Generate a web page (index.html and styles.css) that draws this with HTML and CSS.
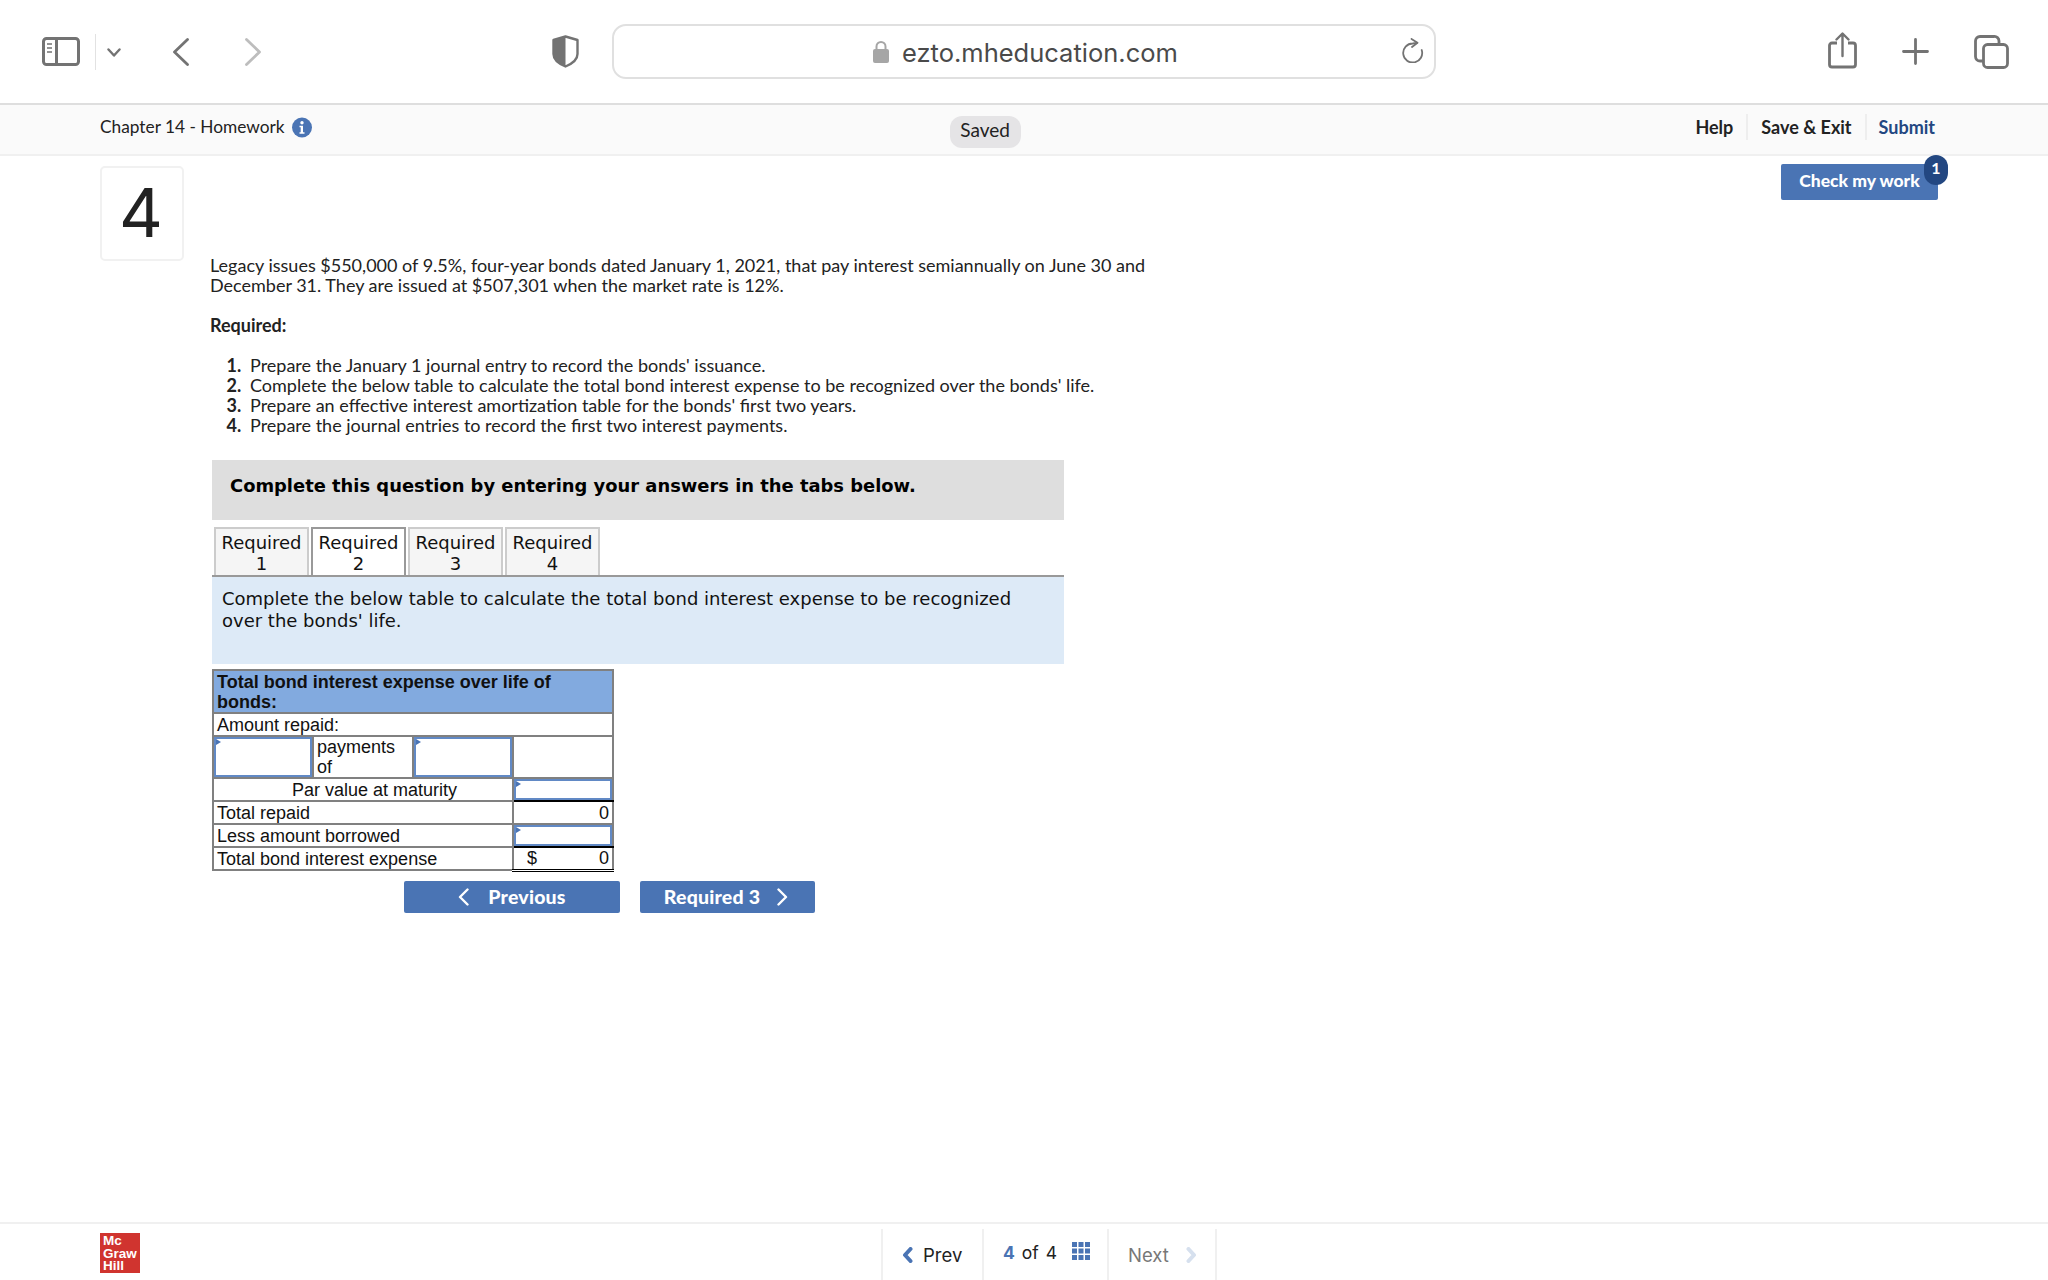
FILE: index.html
```html
<!DOCTYPE html>
<html lang="en">
<head>
<meta charset="utf-8">
<title>Chapter 14 - Homework</title>
<link rel="stylesheet" href="styles.css">
</head>
<body>
<div class="toolbar">
  <svg class="ic-sidebar" width="38" height="29" viewBox="0 0 38 29"><rect x="1.5" y="1.5" width="35" height="26" rx="3" fill="none" stroke="#737373" stroke-width="3"/><path d="M14.5 2v25" stroke="#737373" stroke-width="3"/><path d="M5 7h5M5 11h5M5 15h5" stroke="#737373" stroke-width="1.6"/></svg>
  <span class="tb-sep"></span>
  <svg class="ic-down" width="14" height="9" viewBox="0 0 14 9"><path d="M1.5 1.5L7 7.5l5.500-6" fill="none" stroke="#737373" stroke-width="2.400" stroke-linecap="round" stroke-linejoin="round"/></svg>
  <svg class="ic-back" width="18" height="28" viewBox="0 0 18 28"><path d="M15.500 1.500L2.500 14l13 12.500" fill="none" stroke="#737373" stroke-width="2.800" stroke-linecap="round" stroke-linejoin="round"/></svg>
  <svg class="ic-fwd" width="18" height="28" viewBox="0 0 18 28"><path d="M2.500 1.500L15.500 14l-13 12.500" fill="none" stroke="#bdbdbd" stroke-width="2.800" stroke-linecap="round" stroke-linejoin="round"/></svg>
  <svg class="ic-shield" width="27" height="33" viewBox="0 0 27 33"><path d="M13.500 1.500L25.500 5v14c0 6-6 10-12 12.500C7.500 29 1.500 25 1.500 19V5z" fill="#fff" stroke="#737373" stroke-width="2.400" stroke-linejoin="round"/><path d="M13.500 1.500V31.500C7.500 29 1.500 25 1.500 19V5z" fill="#737373"/></svg>
  <div class="urlbar">
    <svg class="ic-lock" width="16" height="23" viewBox="0 0 16 23"><rect x="0" y="9" width="16" height="14" rx="2" fill="#a6a6a6"/><path d="M3.500 10V6.500a4.500 4.500 0 0 1 9 0V10" fill="none" stroke="#a6a6a6" stroke-width="2"/></svg>
    <span class="url">ezto.mheducation.com</span>
    <svg class="ic-reload" width="24" height="25" viewBox="0 0 24 25"><path d="M21.700 12A9.500 9.500 0 1 1 12.700 5.500L17 4.800" fill="none" stroke="#737373" stroke-width="1.800" stroke-linecap="round"/><path d="M11.500 .9L17.500 4.700 12 9" fill="none" stroke="#737373" stroke-width="1.800" stroke-linecap="round" stroke-linejoin="round"/></svg>
  </div>
  <svg class="ic-share" width="29" height="37" viewBox="0 0 29 37"><path d="M9 11H4a2.500 2.500 0 0 0-2.500 2.500v19A2.500 2.500 0 0 0 4 35h21a2.500 2.500 0 0 0 2.500-2.500v-19A2.500 2.500 0 0 0 25 11h-5" fill="none" stroke="#737373" stroke-width="2.800"/><path d="M14.500 24V2M8.500 7.500l6-6 6 6" fill="none" stroke="#737373" stroke-width="2.400" stroke-linecap="round" stroke-linejoin="round"/></svg>
  <svg class="ic-plus" width="27" height="27" viewBox="0 0 27 27"><path d="M13.500 1.500v24M1.500 13.500h24" stroke="#737373" stroke-width="2.800" stroke-linecap="round"/></svg>
  <svg class="ic-tabs" width="35" height="34" viewBox="0 0 35 34"><rect x="9.500" y="9.500" width="24" height="23" rx="4" fill="none" stroke="#737373" stroke-width="2.800"/><path d="M9 26H6a4.500 4.500 0 0 1-4.500-4.500V6A4.500 4.500 0 0 1 6 1.500h14A4.500 4.500 0 0 1 25 6v3" fill="none" stroke="#737373" stroke-width="2.800"/></svg>
</div>

<header class="app-head">
  <span class="title">Chapter 14 - Homework</span>
  <svg class="ic-info" width="20" height="21" viewBox="0 0 20 21"><circle cx="10" cy="10.500" r="10" fill="#4a74b4"/><circle cx="10" cy="5.700" r="1.700" fill="#fff"/><path d="M7.500 8.800h3.500v6.400h1.500v1.500h-5v-1.500h1.200v-4.900H7.500z" fill="#fff"/></svg>
  <span class="saved">Saved</span>
  <nav class="head-links">
    <a class="lnk">Help</a><a class="lnk">Save &amp; Exit</a><a class="lnk submit">Submit</a>
  </nav>
</header>

<main class="main">
  <div class="qnum">4</div>
  <section class="content">
    <p class="para">Legacy issues $550,000 of 9.5%, four-year bonds dated January 1, 2021, that pay interest semiannually on June 30 and December 31. They are issued at $507,301 when the market rate is 12%.</p>
    <p class="req">Required:</p>
    <ol class="steps">
      <li>Prepare the January 1 journal entry to record the bonds' issuance.</li>
      <li>Complete the below table to calculate the total bond interest expense to be recognized over the bonds' life.</li>
      <li>Prepare an effective interest amortization table for the bonds' first two years.</li>
      <li>Prepare the journal entries to record the first two interest payments.</li>
    </ol>
    <div class="banner">Complete this question by entering your answers in the tabs below.</div>
    <div class="tabs">
      <div class="tab">Required<br>1</div>
      <div class="tab active">Required<br>2</div>
      <div class="tab">Required<br>3</div>
      <div class="tab">Required<br>4</div>
    </div>
    <div class="panel">Complete the below table to calculate the total bond interest expense to be recognized over the bonds' life.</div>
    <table class="sheet">
      <colgroup><col class="c"><col class="c"><col class="c"><col class="c"></colgroup>
      <tr class="r-head"><th colspan="4">Total bond interest expense over life of bonds:</th></tr>
      <tr class="r"><td colspan="4">Amount repaid:</td></tr>
      <tr class="r-tall"><td class="cell-in"><span class="inp"></span></td><td>payments of</td><td class="cell-in"><span class="inp"></span></td><td></td></tr>
      <tr class="r"><td colspan="3" class="ctr">Par value at maturity</td><td class="cell-in total-top"><span class="inp"></span></td></tr>
      <tr class="r"><td colspan="3">Total repaid</td><td class="num">0</td></tr>
      <tr class="r"><td colspan="3">Less amount borrowed</td><td class="cell-in total-top"><span class="inp"></span></td></tr>
      <tr class="r"><td colspan="3">Total bond interest expense</td><td class="num grand"><span class="dollar">$</span>0</td></tr>
    </table>
    <div class="pager">
      <button class="btn btn-prev"><svg width="11" height="18" viewBox="0 0 11 18"><path d="M9.500 1.500L2 9l7.500 7.500" fill="none" stroke="#fff" stroke-width="2.400" stroke-linecap="round" stroke-linejoin="round"/></svg>Previous</button>
      <button class="btn btn-next">Required 3<svg width="11" height="18" viewBox="0 0 11 18"><path d="M1.500 1.500L9 9l-7.500 7.500" fill="none" stroke="#fff" stroke-width="2.400" stroke-linecap="round" stroke-linejoin="round"/></svg></button>
    </div>
  </section>
  <div class="check-wrap">
    <button class="check">Check my work</button>
    <span class="badge">1</span>
  </div>
</main>

<footer class="foot">
  <div class="logo">Mc<br>Graw<br>Hill</div>
  <nav class="foot-nav">
    <div class="seg seg-prev"><svg width="11" height="16" viewBox="0 0 11 16"><path d="M8.500 2L3 8l5.500 6" fill="none" stroke="#4a74b4" stroke-width="4" stroke-linecap="round" stroke-linejoin="round"/></svg><span>Prev</span></div>
    <div class="seg seg-count"><b class="cur">4</b><span class="of">of</span><span>4</span><svg class="grid" width="18" height="18" viewBox="0 0 18 18"><path fill="#4a74b4" d="M0 0h5v5H0zM6.500 0h5v5h-5zM13 0h5v5h-5zM0 6.500h5v5H0zM6.500 6.500h5v5h-5zM13 6.500h5v5h-5zM0 13h5v5H0zM6.500 13h5v5h-5zM13 13h5v5h-5z"/></svg></div>
    <div class="seg seg-next"><span>Next</span><svg width="11" height="16" viewBox="0 0 11 16"><path d="M2.500 2L8 8l-5.500 6" fill="none" stroke="#d6e0ee" stroke-width="4" stroke-linecap="round" stroke-linejoin="round"/></svg></div>
  </nav>
</footer>
</body>
</html>
```
FILE: styles.css
```css
* { box-sizing: border-box; }
html, body { margin: 0; padding: 0; }
body {
  width: 2048px; height: 1280px; overflow: hidden;
  display: flex; flex-direction: column;
  background: #fff; color: #222;
  font-family: Lato, "Liberation Sans", sans-serif;
}

/* browser toolbar */
.toolbar {
  height: 105px; flex: none; display: flex; align-items: center;
  padding-left: 42px; border-bottom: 2px solid #dedede;
}
.toolbar svg { flex: none; }
.tb-sep { width: 1px; height: 36px; background: #e2e2e2; margin-left: 15px; }
.ic-down { margin-left: 11px; margin-top: 2px; }
.ic-back { margin-left: 51px; }
.ic-fwd { margin-left: 54px; }
.ic-shield { margin-left: 290px; }
.urlbar {
  position: relative; width: 824px; height: 55px; margin-left: 33px;
  border: 2px solid #e0e0e0; border-radius: 14px;
  display: flex; align-items: center; padding-left: 259px;
}
.url {
  margin-left: 13px; margin-top: 2px; font-family: Inter, sans-serif; font-size: 25.500px; color: #4a4a4a;
}
.ic-reload { margin-left: auto; margin-right: 10px; margin-bottom: 2px; }
.ic-share { margin-left: 392px; margin-bottom: 3px; }
.ic-plus { margin-left: 45px; }
.ic-tabs { margin-left: 45px; }

/* app header */
.app-head {
  height: 51px; flex: none; display: flex; align-items: center;
  padding: 0 112px 5px 100px; background: #fafafa; border-bottom: 2px solid #f0f0f0;
}
.title { font-size: 17.300px; color: #222; margin-bottom: 2px; }
.ic-info { margin-left: 7px; }
.saved {
  margin-left: 638px; margin-top: 9px; width: 71px; height: 32px; border-radius: 12px; padding-bottom: 4px;
  background: #e5e4e6; font-size: 19px; display: flex; align-items: center; justify-content: center;
}
.head-links { margin-left: auto; display: flex; align-items: center; }
.lnk { font-size: 18px; font-weight: 700; padding: 0 13px; border-left: 2px solid #eee; line-height: 26px; }
.lnk:first-child { border-left: 0; }
.lnk:last-child { padding-right: 0; }
.submit { color: #234781; margin-right: 1px; padding-left: 12px; }

/* main */
.main {
  flex: 1; display: flex; align-items: flex-start;
  padding: 8px 110px 0 100px;
}
.qnum {
  width: 84px; height: 95px; flex: none; margin-top: 2px; margin-right: 26px; padding-bottom: 3px; padding-right: 2px;
  border: 2px solid #f1f1f1; border-radius: 5px;
  display: flex; align-items: center; justify-content: center;
  font-size: 68px; color: #222; font-family: Inter, sans-serif;
}
.content { width: 960px; flex: none; padding-top: 91px; }
.para { margin: 0; width: 950px; font-size: 18px; line-height: 20px; }
.req { margin: 20px 0 0; font-size: 18px; line-height: 20px; font-weight: 700; }
.steps { margin: 20px 0 0; padding: 0 0 0 40px; font-size: 18px; line-height: 20px; }
.steps li::marker { font-weight: 700; content: counter(list-item) ".\00a0\00a0"; }
.banner {
  margin: 25px 0 0 2px; width: 852px; height: 60px; padding: 15px 18px;
  background: #dedede; color: #000;
  font-family: "DejaVu Sans", Verdana, sans-serif; font-weight: 700; font-size: 17.900px; line-height: 22px;
}
.tabs {
  margin: 7px 0 0 2px; width: 852px; display: flex; gap: 2px; padding-left: 2px;
  border-bottom: 2px solid #999; height: 50px;
  font-family: "DejaVu Sans", Verdana, sans-serif; font-size: 18px; line-height: 21px; color: #111;
}
.tab {
  width: 95px; height: 48px; text-align: center; padding-top: 3px; white-space: nowrap;
  border: 2px solid #ccc; border-bottom: 0; background: #f5f5f5;
}
.tab.active { background: #fff; border-color: #999; }
.panel {
  margin-left: 2px; width: 852px; height: 87px; padding: 11px 10px;
  background: #ddeaf7; color: #111;
  font-family: "DejaVu Sans", Verdana, sans-serif; font-size: 18px; line-height: 21.500px;
}
.sheet {
  margin: 5px 0 0 2px; width: 402px; table-layout: fixed; border-collapse: collapse;
  font-family: "Liberation Sans", Arial, sans-serif; font-size: 18px; line-height: 20px; color: #111;
}
.c { width: 100px; }
.sheet th, .sheet td { border: 2px solid #808080; padding: 0 3px; text-align: left; vertical-align: middle; overflow: hidden; }
.sheet th { background: #82aadf; font-weight: 700; }
.r-head { height: 43px; }
.r { height: 23px; }
.r-tall { height: 42px; }
.sheet td.ctr { text-align: center; padding-left: 26px; }
.sheet td.num { text-align: right; position: relative; }
.sheet td.cell-in { padding: 0; height: 100%; }
.inp { display: block; position: relative; height: 21px; border: 2px solid #6189c5; }
.r-tall .inp { height: 40px; }
.inp::before {
  content: ""; position: absolute; left: 0; top: 0;
  border-left: 5px solid #4a74b4; border-top: 3px solid transparent; border-bottom: 3px solid transparent;
}
.sheet td.total-top { border-bottom: 2px solid #000; }
.sheet td.grand { border-bottom: 3px double #000; line-height: 19px; }
.dollar { float: left; margin-left: 10px; }
.pager { margin: 9px 0 0 194px; display: flex; gap: 20px; }
.btn {
  height: 32px; border: 0; border-radius: 2px; background: #4a74b4; color: #fff; padding: 0;
  font-family: Lato, sans-serif; font-size: 19.500px; font-weight: 900; letter-spacing: .2px;
  display: flex; align-items: center; justify-content: center;
}
.btn-prev { width: 216px; gap: 19px; }
.btn-next { width: 175px; gap: 17px; padding-right: 3px; }

.check-wrap { margin-left: auto; position: relative; flex: none; }
.check {
  width: 157px; height: 36px; border: 0; border-radius: 2px; background: #4a74b4; color: #fff; padding: 0 0 4px 0;
  font-family: Lato, sans-serif; font-size: 17.500px; font-weight: 900;
}
.badge {
  position: absolute; right: -10px; top: -9px; width: 24px; height: 30px; border-radius: 12px;
  background: #234781; color: #fff; font-size: 16px; font-weight: 700; text-align: center; line-height: 26px;
}

/* footer */
.foot {
  height: 58px; flex: none; display: flex; border-top: 2px solid #f0f0f0; overflow: hidden;
}
.logo {
  width: 40px; height: 40px; margin: 9px 0 0 100px; background: #d0342f; color: #fff;
  font-family: "Liberation Sans", sans-serif; font-weight: 700; font-size: 13.500px; line-height: 12.500px; padding: 2px 0 0 3px;
}
.foot-nav { margin: 5px 0 0 741px; display: flex; height: 52px; border-right: 2px solid #f0f0f0; }
.seg {
  border-left: 2px solid #f0f0f0; display: flex; align-items: center; font-size: 18.500px;
  font-family: Inter, sans-serif; color: #222;
}
.seg-prev { width: 101px; padding-left: 19px; gap: 10px; }
.seg-count { width: 125px; padding-left: 19px; padding-bottom: 6px; font-size: 17.500px; }
.cur { color: #4a74b4; }
.of { margin: 0 7px; }
.grid { margin-left: 15px; margin-bottom: 3px; }
.seg-next { width: 108px; padding-left: 19px; gap: 17px; color: #777; }
```
